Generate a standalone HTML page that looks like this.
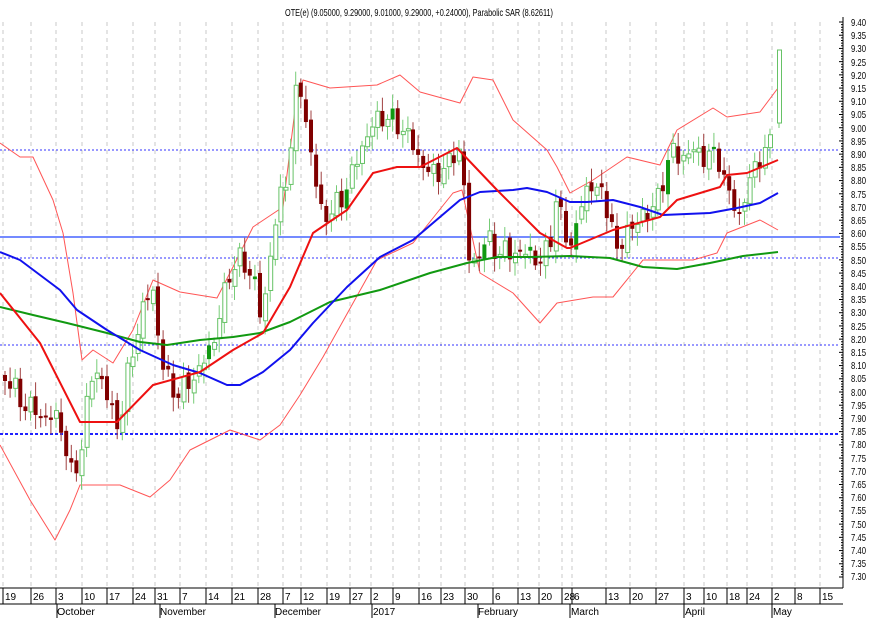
<!DOCTYPE html>
<html><head><meta charset="utf-8"><style>
html,body{margin:0;padding:0;background:#fff;width:870px;height:620px;overflow:hidden}
svg{display:block}
text{font-family:"Liberation Sans",sans-serif;fill:#000}
</style></head><body>
<svg id="s" width="870" height="620" xmlns="http://www.w3.org/2000/svg">
<g id="grid"></g>
<g id="bands"></g>
<g id="candles"></g>
<g id="lines"></g>
<g id="axis"></g>
<text x="419" y="16" font-size="10.5" text-anchor="middle" textLength="268" lengthAdjust="spacingAndGlyphs">OTE(e) (9.05000, 9.29000, 9.01000, 9.29000, +0.24000), Parabolic SAR (8.62611)</text>
<g font-size="10.5">
<text x="851" y="26" textLength="15" lengthAdjust="spacingAndGlyphs">9.40</text>
<text x="851" y="39" textLength="15" lengthAdjust="spacingAndGlyphs">9.35</text>
<text x="851" y="52" textLength="15" lengthAdjust="spacingAndGlyphs">9.30</text>
<text x="851" y="66" textLength="15" lengthAdjust="spacingAndGlyphs">9.25</text>
<text x="851" y="79" textLength="15" lengthAdjust="spacingAndGlyphs">9.20</text>
<text x="851" y="92" textLength="15" lengthAdjust="spacingAndGlyphs">9.15</text>
<text x="851" y="105" textLength="15" lengthAdjust="spacingAndGlyphs">9.10</text>
<text x="851" y="118" textLength="15" lengthAdjust="spacingAndGlyphs">9.05</text>
<text x="851" y="132" textLength="15" lengthAdjust="spacingAndGlyphs">9.00</text>
<text x="851" y="145" textLength="15" lengthAdjust="spacingAndGlyphs">8.95</text>
<text x="851" y="158" textLength="15" lengthAdjust="spacingAndGlyphs">8.90</text>
<text x="851" y="171" textLength="15" lengthAdjust="spacingAndGlyphs">8.85</text>
<text x="851" y="184" textLength="15" lengthAdjust="spacingAndGlyphs">8.80</text>
<text x="851" y="198" textLength="15" lengthAdjust="spacingAndGlyphs">8.75</text>
<text x="851" y="211" textLength="15" lengthAdjust="spacingAndGlyphs">8.70</text>
<text x="851" y="224" textLength="15" lengthAdjust="spacingAndGlyphs">8.65</text>
<text x="851" y="237" textLength="15" lengthAdjust="spacingAndGlyphs">8.60</text>
<text x="851" y="250" textLength="15" lengthAdjust="spacingAndGlyphs">8.55</text>
<text x="851" y="264" textLength="15" lengthAdjust="spacingAndGlyphs">8.50</text>
<text x="851" y="277" textLength="15" lengthAdjust="spacingAndGlyphs">8.45</text>
<text x="851" y="290" textLength="15" lengthAdjust="spacingAndGlyphs">8.40</text>
<text x="851" y="303" textLength="15" lengthAdjust="spacingAndGlyphs">8.35</text>
<text x="851" y="316" textLength="15" lengthAdjust="spacingAndGlyphs">8.30</text>
<text x="851" y="330" textLength="15" lengthAdjust="spacingAndGlyphs">8.25</text>
<text x="851" y="343" textLength="15" lengthAdjust="spacingAndGlyphs">8.20</text>
<text x="851" y="356" textLength="15" lengthAdjust="spacingAndGlyphs">8.15</text>
<text x="851" y="369" textLength="15" lengthAdjust="spacingAndGlyphs">8.10</text>
<text x="851" y="382" textLength="15" lengthAdjust="spacingAndGlyphs">8.05</text>
<text x="851" y="396" textLength="15" lengthAdjust="spacingAndGlyphs">8.00</text>
<text x="851" y="409" textLength="15" lengthAdjust="spacingAndGlyphs">7.95</text>
<text x="851" y="422" textLength="15" lengthAdjust="spacingAndGlyphs">7.90</text>
<text x="851" y="435" textLength="15" lengthAdjust="spacingAndGlyphs">7.85</text>
<text x="851" y="448" textLength="15" lengthAdjust="spacingAndGlyphs">7.80</text>
<text x="851" y="462" textLength="15" lengthAdjust="spacingAndGlyphs">7.75</text>
<text x="851" y="475" textLength="15" lengthAdjust="spacingAndGlyphs">7.70</text>
<text x="851" y="488" textLength="15" lengthAdjust="spacingAndGlyphs">7.65</text>
<text x="851" y="501" textLength="15" lengthAdjust="spacingAndGlyphs">7.60</text>
<text x="851" y="514" textLength="15" lengthAdjust="spacingAndGlyphs">7.55</text>
<text x="851" y="528" textLength="15" lengthAdjust="spacingAndGlyphs">7.50</text>
<text x="851" y="541" textLength="15" lengthAdjust="spacingAndGlyphs">7.45</text>
<text x="851" y="554" textLength="15" lengthAdjust="spacingAndGlyphs">7.40</text>
<text x="851" y="567" textLength="15" lengthAdjust="spacingAndGlyphs">7.35</text>
<text x="851" y="580" textLength="15" lengthAdjust="spacingAndGlyphs">7.30</text>
</g>
<g font-size="10">
<text x="5" y="600">19</text><text x="33" y="600">26</text><text x="58" y="600">3</text><text x="84" y="600">10</text>
<text x="109" y="600">17</text><text x="135" y="600">24</text><text x="157" y="600">31</text><text x="182" y="600">7</text>
<text x="208" y="600">14</text><text x="234" y="600">21</text><text x="260" y="600">28</text><text x="285" y="600">7</text>
<text x="303" y="600">12</text><text x="329" y="600">19</text><text x="352" y="600">27</text><text x="373" y="600">2</text>
<text x="395" y="600">9</text><text x="421" y="600">16</text><text x="443" y="600">23</text><text x="467" y="600">30</text>
<text x="495" y="600">6</text><text x="520" y="600">13</text><text x="541" y="600">20</text><text x="564" y="600">28</text>
<text x="574" y="600">6</text><text x="608" y="600">13</text><text x="632" y="600">20</text><text x="658" y="600">27</text>
<text x="686" y="600">3</text><text x="706" y="600">10</text><text x="729" y="600">18</text><text x="749" y="600">24</text>
<text x="774" y="600">2</text><text x="797" y="600">8</text><text x="822" y="600">15</text>
<text x="57" y="615" textLength="38" lengthAdjust="spacingAndGlyphs">October</text><text x="160" y="615" textLength="46" lengthAdjust="spacingAndGlyphs">November</text><text x="275" y="615" textLength="46" lengthAdjust="spacingAndGlyphs">December</text>
<text x="373" y="615">2017</text><text x="478" y="615" textLength="40" lengthAdjust="spacingAndGlyphs">February</text><text x="571" y="615" textLength="28" lengthAdjust="spacingAndGlyphs">March</text>
<text x="685" y="615">April</text><text x="773" y="615">May</text>
</g>
</svg>
<script>
(function(){
var NS="http://www.w3.org/2000/svg";
function el(p,t,a){var e=document.createElementNS(NS,t);for(var k in a)e.setAttribute(k,a[k]);document.getElementById(p).appendChild(e);return e;}
var wk=[3,31,56,82,107,133,155,180,206,232,258,283,301,327,350,371,393,419,441,465,493,518,539,562,572,606,630,656,684,704,727,747,772,795,820];
wk.forEach(function(x){
 el("grid","line",{x1:x,y1:22,x2:x,y2:586,stroke:"#c8c8c8","stroke-dasharray":"4,4","stroke-width":1});
 el("axis","line",{x1:x,y1:588,x2:x,y2:604,stroke:"#000","stroke-width":1});
});
[57,160,275,372,478,570,684,772].forEach(function(x){el("axis","line",{x1:x,y1:604,x2:x,y2:618,stroke:"#000"});});
el("axis","line",{x1:0,y1:588,x2:843,y2:588,stroke:"#000"});
el("axis","line",{x1:0,y1:604,x2:843,y2:604,stroke:"#000"});
el("axis","line",{x1:843,y1:17,x2:843,y2:588,stroke:"#000"});
for(var i=0;i<=42;i++){var y=22+i*13.214;el("axis","line",{x1:839,y1:y,x2:843,y2:y,stroke:"#000"});
 for(var j=1;j<5&&i<42;j++){var yy=y+j*2.643;el("axis","line",{x1:841,y1:yy,x2:843,y2:yy,stroke:"#000"});}}
[[150,"2,2"],[258,"2,2"],[345,"2,2"]].forEach(function(h){el("grid","line",{x1:0,y1:h[0],x2:840,y2:h[0],stroke:"#3333ff","stroke-dasharray":h[1]});});
el("grid","line",{x1:0,y1:434,x2:840,y2:434,stroke:"#2222ff","stroke-dasharray":"3,2","stroke-width":2});
el("grid","line",{x1:0,y1:237,x2:840,y2:237,stroke:"#2244ff","stroke-width":1.2});
function pl(g,pts,col,w){el(g,"polyline",{points:pts.map(function(p){return p.join(",")}).join(" "),fill:"none",stroke:col,"stroke-width":w,"stroke-linejoin":"round"});}
pl("bands",[[0,143],[20,157],[33,157],[53,200],[63,233],[73,293],[82,360],[93,350],[113,363],[133,330],[153,280],[180,292],[217,298],[233,267],[253,227],[283,207],[295,110],[303,80],[330,88],[377,85],[400,75],[420,92],[460,103],[473,77],[493,80],[513,120],[547,150],[557,167],[570,193],[593,180],[627,157],[660,165],[677,130],[713,108],[727,117],[760,112],[778,88]],"#ff5555",1);
pl("bands",[[0,445],[30,500],[55,540],[70,510],[80,485],[120,485],[150,497],[170,480],[190,450],[230,430],[260,440],[280,425],[300,395],[323,357],[377,260],[413,243],[453,193],[462,190],[480,273],[513,293],[540,323],[557,303],[593,297],[613,297],[643,260],[693,260],[717,253],[727,233],[760,220],[778,230]],"#ff5555",1);
pl("lines",[[0,307],[33,315],[67,323],[107,333],[140,342],[167,345],[200,340],[233,337],[260,333],[290,322],[330,302],[380,290],[430,273],[467,263],[497,257],[530,257],[570,256],[610,258],[643,267],[677,269],[710,263],[743,256],[778,252]],"#119911",2);
pl("lines",[[0,252],[20,260],[40,275],[60,290],[77,310],[107,330],[140,350],[173,365],[200,373],[227,385],[240,385],[263,372],[290,350],[313,323],[347,287],[380,257],[413,240],[440,217],[460,200],[480,192],[513,190],[527,188],[547,192],[570,202],[587,202],[613,200],[640,207],[663,215],[710,213],[737,208],[760,203],[778,193]],"#1111ee",2);
pl("lines",[[0,293],[40,343],[80,422],[117,422],[153,385],[200,372],[233,350],[263,333],[290,287],[313,233],[347,210],[373,173],[397,167],[420,167],[457,148],[497,190],[540,233],[567,248],[570,248],[613,230],[660,217],[677,200],[720,187],[727,175],[747,173],[778,160]],"#ee1111",2);
var K=[[5,375],[20,400],[40,415],[60,420],[72,480],[80,455],[90,380],[100,370],[110,410],[120,425],[130,360],[145,300],[155,290],[160,360],[170,385],[180,395],[190,380],[200,370],[215,335],[230,270],[240,260],[255,280],[262,330],[270,250],[278,210],[285,180],[290,150],[298,75],[305,115],[312,160],[320,210],[330,215],[340,200],[350,180],[360,150],[370,130],[380,115],[390,120],[400,125],[410,140],[420,160],[430,175],[440,170],[450,165],[458,140],[465,200],[470,270],[480,250],[490,240],[500,255],[510,250],[520,255],[530,250],[540,265],[550,240],[555,200],[565,230],[570,250],[580,210],[590,180],[600,195],[610,210],[618,265],[625,225],[635,230],[645,210],[655,210],[665,170],[672,150],[680,160],[690,150],[700,155],[710,155],[720,160],[730,200],[740,215],[748,185],[760,155],[768,150],[775,130]];
function f(x){for(var i=1;i<K.length;i++){if(x<=K[i][0]){var a=K[i-1],b=K[i],t=(x-a[0])/(b[0]-a[0]);return a[1]+t*(b[1]-a[1]);}}return K[K.length-1][1];}
var prev=f(5);
for(var x=5,n=0;x<=773;x+=5.1,n++){
 var c=f(x)+Math.sin(n*2.3)*8+Math.cos(n*1.7)*6;
 var o=prev+Math.sin(n*3.1)*4;
 var bt=Math.min(o,c),bb=Math.max(o,c);if(bb-bt<2)bb=bt+2;
 var wt=bt-4-Math.abs(Math.sin(n*1.3))*10,wb=bb+4+Math.abs(Math.cos(n*2.1))*10;
 var down=c>o;
 el("candles","line",{x1:x,y1:wt,x2:x,y2:wb,stroke:down?"#a04040":"#77cc77","stroke-width":1});
 if(down)el("candles","rect",{x:x-2,y:bt,width:4,height:bb-bt,fill:"#800000"});
 else if(n%9==4)el("candles","rect",{x:x-2,y:bt,width:4,height:bb-bt,fill:"#119911"});
 else el("candles","rect",{x:x-1.5,y:bt,width:4,height:bb-bt,fill:"#fff",stroke:"#66c266","stroke-width":1});
 prev=c;
}
el("candles","line",{x1:779,y1:50,x2:779,y2:128,stroke:"#77cc77"});
el("candles","rect",{x:777.5,y:50,width:4,height:73,fill:"#fff",stroke:"#66c266","stroke-width":1});
})();
</script>
</body></html>
